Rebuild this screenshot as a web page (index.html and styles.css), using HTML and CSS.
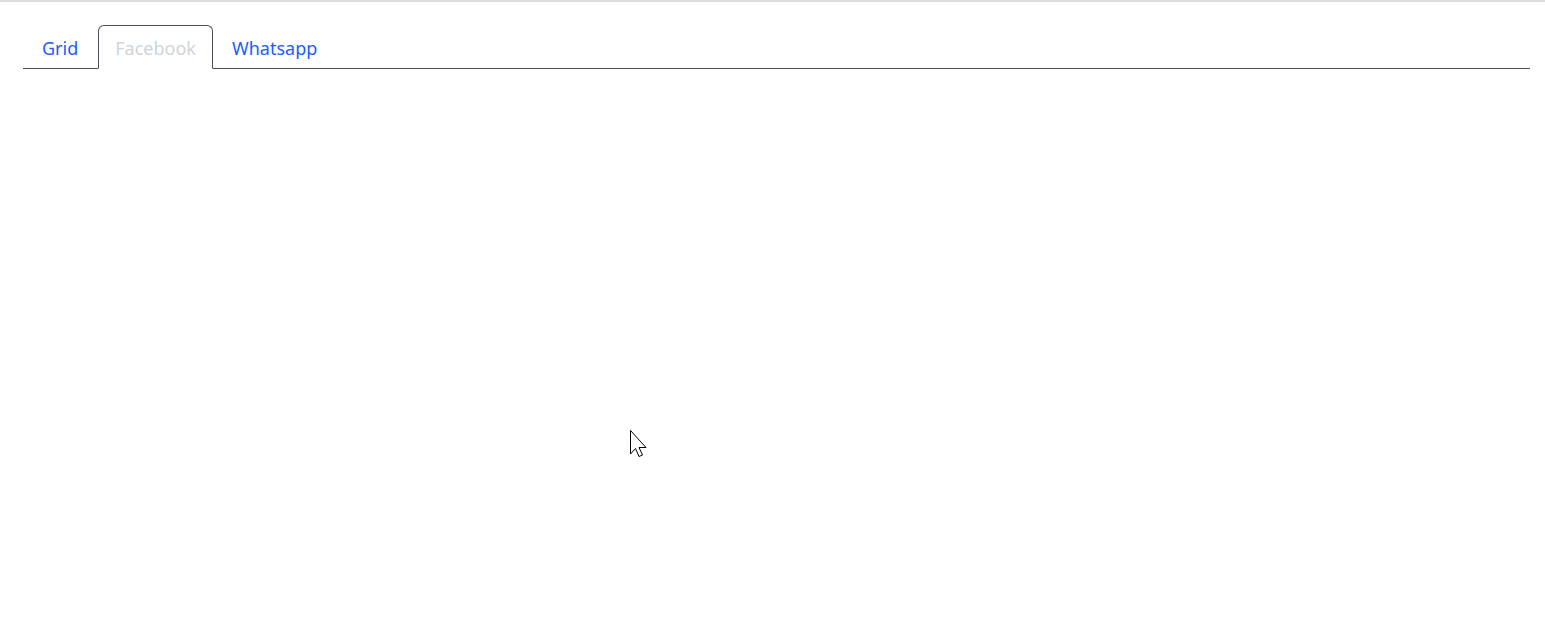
FILE: index.html
```html
<!DOCTYPE html>
<html lang="en">
<head>
  <meta charset="UTF-8" />
  <title>Tabs</title>
  <link rel="stylesheet" href="styles.css">
</head>
<body>
  <div class="topbar"></div>

  <div class="page">
    <ul class="tabs">
      <li><a class="tab-link" href="#">Grid</a></li>
      <li><a class="tab-link active" href="#">Facebook</a></li>
      <li><a class="tab-link" href="#">Whatsapp</a></li>
    </ul>
  </div>

  <!-- mouse pointer from the screenshot -->
  <svg class="pointer" width="20" height="30" viewBox="0 0 20 30">
    <path d="M1.5 1.5 L1.5 25 L6.5 19.5 L10 27.5 L13.5 26 L10 18.5 L17 18.5 Z" fill="#fff" stroke="#000" stroke-width="1" stroke-linejoin="miter"/>
  </svg>
</body>
</html>
```
FILE: styles.css
```css
body {
  margin: 0;
  font-family: "Noto Sans", "Open Sans", sans-serif;
  background: #fff;
}
.topbar {
  height: 2px;
  background: #dcdcdc;
}
.page {
  padding: 23px 15px 0 23px;
}
.tabs {
  list-style: none;
  margin: 0;
  padding: 0;
  display: flex;
  border-bottom: 1px solid #495057;
}
.tabs li {
  margin-bottom: -1px;
}
.tab-link {
  display: block;
  padding: 10px 19px 8px 18px;
  font-size: 18px;
  line-height: 24px;
  color: #1a5dfd;
  text-decoration: none;
  border: 1px solid transparent;
  border-top-left-radius: 6px;
  border-top-right-radius: 6px;
}
.tab-link.active {
  color: #ced4da;
  border-color: #495057 #495057 #fff;
  padding: 10px 16px 8px;
}
.pointer {
  position: absolute;
  left: 629px;
  top: 429px;
}
```
